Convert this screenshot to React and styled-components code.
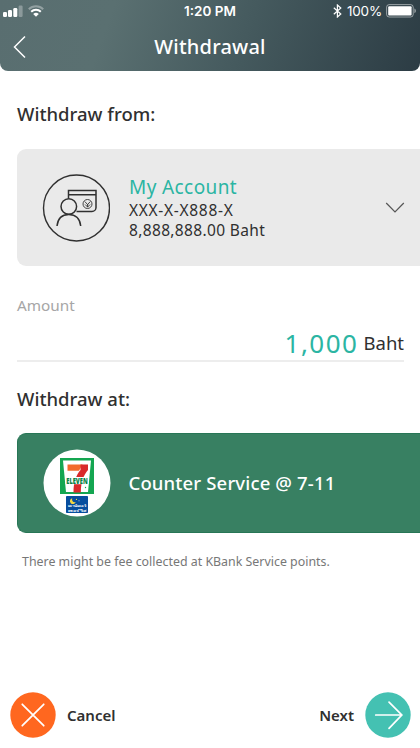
import styled, { createGlobalStyle } from "styled-components";

export default function App() {
  return (
    <>
      <GlobalStyle />
      <Screen>
        <Header>
          <StatusBar>
            <StatusGroup>
              <SignalIcon />
              <WifiIcon />
            </StatusGroup>
            <Clock>1:20 PM</Clock>
            <StatusGroup $end>
              <BluetoothIcon />
              <Percent>100%</Percent>
              <BatteryIcon />
            </StatusGroup>
          </StatusBar>
          <NavBar>
            <BackButton aria-label="Back">
              <svg width="13" height="24" viewBox="0 0 13 24" fill="none" stroke="#fff" strokeWidth="1.5">
                <path d="M12 1.5 1.5 12 12 22.5" />
              </svg>
            </BackButton>
            <Title>Withdrawal</Title>
          </NavBar>
        </Header>
        <Content>
          <SectionTitle>Withdraw from:</SectionTitle>
          <AccountCard>
            <AccountIcon />
            <AccountInfo>
              <AccountName>My Account</AccountName>
              <AccountLine $spacing="0.7px">XXX-X-X888-X</AccountLine>
              <AccountLine $spacing="0.35px">8,888,888.00 Baht</AccountLine>
            </AccountInfo>
            <ChevronIcon />
          </AccountCard>
          <AmountField>
            <AmountLabel>Amount</AmountLabel>
            <AmountRow>
              <AmountValue>1,000</AmountValue>
              <Currency>Baht</Currency>
            </AmountRow>
          </AmountField>
          <SectionTitle>Withdraw at:</SectionTitle>
          <ServiceCard>
            <SevenLogo />
            <ServiceName>Counter Service @ 7-11</ServiceName>
          </ServiceCard>
          <Note>There might be fee collected at KBank Service points.</Note>
        </Content>
        <Footer>
          <Action>
            <RoundIcon $color="#ff671f">
              <path d="m12 12 21 21M33 12 12 33" />
            </RoundIcon>
            <span>Cancel</span>
          </Action>
          <Action>
            <span>Next</span>
            <RoundIcon $color="#44c1b2">
              <path d="M10.5 22.5H36M23.5 10 36 22.5l-12.5 13" />
            </RoundIcon>
          </Action>
        </Footer>
      </Screen>
    </>
  );
}

function SignalIcon() {
  return (
    <svg width="20" height="12" viewBox="0 0 20 12" fill="#fff">
      <rect x="0" y="7" width="4" height="5" rx="1.2" />
      <rect x="5" y="5" width="4" height="7" rx="1.2" />
      <rect x="10.3" y="3" width="4" height="9" rx="1.2" />
      <rect x="15.6" y="0.5" width="4" height="11.5" rx="1.2" opacity="0.3" />
    </svg>
  );
}

function WifiIcon() {
  return (
    <svg width="16" height="12" viewBox="0 0 16 12" fill="none" stroke="#fff" strokeWidth="2">
      <path d="M.8 4.3a10.2 10.2 0 0 1 14.4 0" opacity="0.35" />
      <path d="M3.2 6.8a6.8 6.8 0 0 1 9.6 0" />
      <path d="M8 11.8 5.2 9a4 4 0 0 1 5.6 0Z" fill="#fff" stroke="none" />
    </svg>
  );
}

function BluetoothIcon() {
  return (
    <svg width="9" height="14" viewBox="0 0 9 14" fill="none" stroke="#fff" strokeWidth="1.2">
      <path d="m.8 3.8 7 6.2-3.4 3V1l3.4 3-7 6.2" />
    </svg>
  );
}

function BatteryIcon() {
  return (
    <svg width="31" height="14" viewBox="0 0 31 14">
      <rect x="0.6" y="0.6" width="26.6" height="12.4" rx="2.6" fill="none" stroke="#fff" opacity="0.5" />
      <rect x="2.2" y="2.2" width="23.4" height="9.2" rx="1" fill="#fff" />
      <path d="M28.4 4.5c2 .7 2 4 0 4.7Z" fill="#fff" opacity="0.5" />
    </svg>
  );
}

function ChevronIcon() {
  return (
    <svg width="20" height="12" viewBox="0 0 20 12" fill="none" stroke="#555" strokeWidth="1.2">
      <path d="m1.2 1 8.800 9L18.800 1" />
    </svg>
  );
}

function AccountIcon() {
  return (
    <svg width="68" height="68" viewBox="0 0 68 68" fill="none" stroke="#303030" strokeWidth="1.5">
      <circle cx="34.5" cy="34" r="33" strokeWidth="1.4" />
      <path d="M26.500 24.500V16.500H54V33.500a4 4 0 0 1-4 4H34.500M26.500 20.800H54" />
      <circle cx="26.800" cy="32.500" r="7.800" />
      <path d="M15 52c.8-7.600 5.400-11.600 11.800-11.600S38 44.400 38.700 52" />
      <g strokeWidth="0.9">
        <circle cx="45.500" cy="30" r="4.500" />
        <path d="m42.900 27.600 2.700 3 2.600-3M45.600 30v3.300M43.100 30.500l2.500 2.500 2.500-2.500" />
      </g>
    </svg>
  );
}

function SevenLogo() {
  return (
    <svg width="68" height="68" viewBox="0 0 68 68">
      <circle cx="34" cy="34" r="33.5" fill="#fff" />
      <rect x="17" y="9" width="34" height="36" fill="#14a651" />
      <path d="M20 11.500h28L45 43H23Z" fill="#fff" />
      <path d="M24.500 15.500h15L36 21.800H24.500Z" fill="#f26a2c" />
      <path d="M37.500 15.500H45v5.500c-4.500 5.500-7 11-7.200 22.500h-7.300C30.500 33 33 26.500 37.500 21Z" fill="#d9292b" />
      <rect x="22.500" y="28" width="23" height="7.200" fill="#fff" />
      <LogoText x="34" y="34.500" textLength="21.5" lengthAdjust="spacingAndGlyphs" $size={7.8} $weight={900} $color="#078345">
        ELEVEN
      </LogoText>
      <circle cx="42.500" cy="38.500" r="0.7" fill="#14a651" />
      <rect x="23" y="47" width="22" height="17" rx="0.8" fill="#074e9e" />
      <path d="M29.200 49.200a3 3 0 1 0 3.600 3.800c-2.400.8-4.400-1-3.600-3.800Z" fill="#f5d742" />
      <circle cx="33.500" cy="50.400" r="0.6" fill="#f5d742" />
      <circle cx="36" cy="51.800" r="0.5" fill="#d9edf8" />
      <LogoText x="34" y="58.200" textLength="18.5" lengthAdjust="spacingAndGlyphs" $size={3.3} $color="#fff">
        เคาน์เตอร์
      </LogoText>
      <LogoText x="34" y="63" textLength="18.5" lengthAdjust="spacingAndGlyphs" $size={3.3} $color="#fff">
        เซอร์วิส
      </LogoText>
    </svg>
  );
}

function RoundIcon({ $color, children }) {
  return (
    <svg width="46" height="46" viewBox="0 0 45 45" fill="none" stroke="#fff" strokeWidth="1.7" strokeLinecap="round">
      <circle cx="22.5" cy="22.5" r="22.2" fill={$color} stroke="none" />
      {children}
    </svg>
  );
}

const GlobalStyle = createGlobalStyle`
  * {
    box-sizing: border-box;
  }
  body {
    margin: 0;
    background: #fff;
    font-family: "Noto Sans", "Open Sans", sans-serif;
    color: #303030;
  }
  svg {
    display: block;
    flex-shrink: 0;
  }
`;

const Screen = styled.main`
  display: flex;
  flex-direction: column;
  width: 420px;
  height: 748px;
  overflow: hidden;
  background: #fff;
`;

const Header = styled.header`
  height: 71px;
  flex-shrink: 0;
  border-radius: 0 0 8px 8px;
  color: #fff;
  background: linear-gradient(110deg, #596e70 0%, #5a7071 26%, #455a5e 58%, #2c3c44 100%);
`;

const StatusBar = styled.div`
  display: grid;
  grid-template-columns: 1fr auto 1fr;
  align-items: center;
  height: 22px;
  padding: 0 3px;
  font-family: Inter, Roboto, sans-serif;
`;

const StatusGroup = styled.div`
  display: flex;
  align-items: center;
  gap: 5px;
  justify-content: ${(props) => (props.$end ? "flex-end" : "flex-start")};
`;

const Clock = styled.span`
  font-size: 13.5px;
  font-weight: 600;
  line-height: 20px;
`;

const Percent = styled.span`
  font-size: 13.5px;
  letter-spacing: -0.2px;
  line-height: 20px;
  margin-right: -1px;
`;

const NavBar = styled.div`
  display: grid;
  grid-template-columns: 40px 1fr 40px;
  align-items: center;
  height: 49px;
`;

const BackButton = styled.button`
  padding: 0 0 0 13px;
  border: 0;
  background: none;
`;

const Title = styled.h1`
  margin: 0;
  text-align: center;
  font-size: 20px;
  font-weight: 500;
  line-height: 28px;
  letter-spacing: 0.2px;
`;

const Content = styled.section`
  flex: 1;
  padding: 29px 0 0 17px;
`;

const SectionTitle = styled.h2`
  margin: 0;
  font-size: 18.5px;
  font-weight: 500;
  line-height: 28px;
`;

const Card = styled.div`
  display: flex;
  align-items: center;
  border-radius: 9px 0 0 9px;
`;

const AccountCard = styled(Card)`
  height: 117px;
  margin-top: 21px;
  padding: 0 15px 0 25px;
  background: #eaeaea;
`;

const AccountInfo = styled.div`
  flex: 1;
  padding: 0 0 2px 19px;
`;

const AccountName = styled.div`
  font-size: 19px;
  line-height: 26px;
  letter-spacing: 0.4px;
  color: #2bb5a3;
`;

const AccountLine = styled.div`
  font-size: 15.5px;
  line-height: 20px;
  letter-spacing: ${(props) => props.$spacing || "0"};
`;

const AmountField = styled.div`
  height: 96px;
  margin: 0 16px 23px 0;
  padding-top: 28px;
  border-bottom: 2px solid #ededed;
`;

const AmountLabel = styled.div`
  font-size: 15.3px;
  line-height: 22px;
  color: #a6a6a6;
`;

const AmountRow = styled.div`
  display: flex;
  justify-content: flex-end;
  gap: 5px;
  margin-top: 11px;
`;

const AmountValue = styled.span`
  font-size: 26px;
  line-height: 32px;
  letter-spacing: 1.5px;
  color: #2bb5a3;
`;

const Currency = styled.span`
  font-size: 18.5px;
  line-height: 32px;
`;

const ServiceCard = styled(Card)`
  height: 100px;
  margin-top: 20px;
  padding-left: 25px;
  background: #388062;
  border: solid #287656;
  border-width: 1px 0 1px 1px;
`;

const ServiceName = styled.span`
  padding: 0 0 2px 17.5px;
  color: #fff;
  font-size: 18.5px;
  font-weight: 500;
  letter-spacing: 0.15px;
`;

const Note = styled.p`
  margin: 19px 0 0 5px;
  font-size: 12.4px;
  line-height: 20px;
  color: #777;
`;

const Footer = styled.footer`
  display: flex;
  justify-content: space-between;
  align-items: center;
  height: 46px;
  margin-bottom: 10px;
  padding: 0 9px 0 10px;
`;

const Action = styled.button`
  display: flex;
  align-items: center;
  gap: 11px;
  padding: 0;
  border: 0;
  background: none;
  color: #303030;
  font: 600 15px "Noto Sans", sans-serif;

  span {
    padding-bottom: 1px;
  }
`;

const LogoText = styled.text`
  font-family: "Noto Sans", "DejaVu Sans", sans-serif;
  font-size: ${(props) => props.$size}px;
  font-weight: ${(props) => props.$weight || 600};
  text-anchor: middle;
  fill: ${(props) => props.$color};
`;
